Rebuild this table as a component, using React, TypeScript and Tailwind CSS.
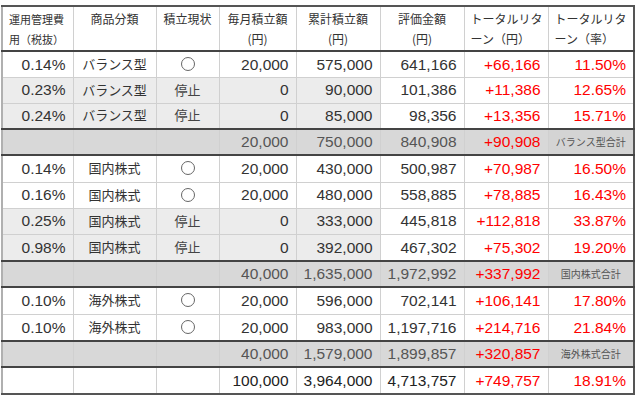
import React from 'react';

type Row = {
  kind: 'item' | 'sub' | 'total';
  fee?: string;
  cat?: string;
  status?: string;
  monthly: string;
  cum: string;
  value: string;
  ret: string;
  rate: string;
};

const rows: Row[] = [
  { kind: 'item', fee: '0.14%', cat: 'バランス型', status: '○', monthly: '20,000', cum: '575,000', value: '641,166', ret: '+66,166', rate: '11.50%' },
  { kind: 'item', fee: '0.23%', cat: 'バランス型', status: '停止', monthly: '0', cum: '90,000', value: '101,386', ret: '+11,386', rate: '12.65%' },
  { kind: 'item', fee: '0.24%', cat: 'バランス型', status: '停止', monthly: '0', cum: '85,000', value: '98,356', ret: '+13,356', rate: '15.71%' },
  { kind: 'sub', monthly: '20,000', cum: '750,000', value: '840,908', ret: '+90,908', rate: 'バランス型合計' },
  { kind: 'item', fee: '0.14%', cat: '国内株式', status: '○', monthly: '20,000', cum: '430,000', value: '500,987', ret: '+70,987', rate: '16.50%' },
  { kind: 'item', fee: '0.16%', cat: '国内株式', status: '○', monthly: '20,000', cum: '480,000', value: '558,885', ret: '+78,885', rate: '16.43%' },
  { kind: 'item', fee: '0.25%', cat: '国内株式', status: '停止', monthly: '0', cum: '333,000', value: '445,818', ret: '+112,818', rate: '33.87%' },
  { kind: 'item', fee: '0.98%', cat: '国内株式', status: '停止', monthly: '0', cum: '392,000', value: '467,302', ret: '+75,302', rate: '19.20%' },
  { kind: 'sub', monthly: '40,000', cum: '1,635,000', value: '1,972,992', ret: '+337,992', rate: '国内株式合計' },
  { kind: 'item', fee: '0.10%', cat: '海外株式', status: '○', monthly: '20,000', cum: '596,000', value: '702,141', ret: '+106,141', rate: '17.80%' },
  { kind: 'item', fee: '0.10%', cat: '海外株式', status: '○', monthly: '20,000', cum: '983,000', value: '1,197,716', ret: '+214,716', rate: '21.84%' },
  { kind: 'sub', monthly: '40,000', cum: '1,579,000', value: '1,899,857', ret: '+320,857', rate: '海外株式合計' },
  { kind: 'total', monthly: '100,000', cum: '3,964,000', value: '4,713,757', ret: '+749,757', rate: '18.91%' },
];

// row heights picked to line up with the screenshot's grid lines
const heights = [
  'h-[26px]', 'h-[26px]', 'h-[26px]', 'h-[26px]', 'h-[27px]', 'h-[26px]', 'h-[26px]',
  'h-[27px]', 'h-[26px]', 'h-[27px]', 'h-[27px]', 'h-[26px]', 'h-[27px]',
];

const num = "font-['Liberation_Sans','Noto_Sans_CJK_JP',sans-serif] text-[15.5px] text-right px-[7px]";
const jp = "font-['Noto_Sans_CJK_JP',sans-serif] text-[13px] text-center pb-[2px]";
const cell = 'border border-[#d0d0d0] p-0 leading-none';
const head = 'border border-[#d0d0d0] border-b-2 border-b-[#444] align-top pt-[2px] font-normal whitespace-nowrap';

export default function App() {
  return (
    <div className="bg-white w-[640px] h-[400px] pt-[5px] pl-[1px]">
      <table className="table-fixed border-collapse w-[632px] text-[#333] border-t-2 border-r-2 border-b-2 border-l-2 border-t-[#555] border-r-[#555] border-b-[#555] border-l-[#b0b0b0]">
        <colgroup>
          <col className="w-[71px]" />
          <col className="w-[83px]" />
          <col className="w-[63px]" />
          <col className="w-[77px]" />
          <col className="w-[84px]" />
          <col className="w-[84px]" />
          <col className="w-[84px]" />
          <col className="w-[86px]" />
        </colgroup>
        <thead>
          <tr className="font-['Noto_Sans_CJK_JP',sans-serif] text-[12px] leading-[20px]">
            <th className={`${head} h-[45px] px-[6px] text-left text-[11px]`}>運用管理費<br />用（税抜）</th>
            <th className={`${head} text-center`}>商品分類</th>
            <th className={`${head} text-center`}>積立現状</th>
            <th className={`${head} text-center`}>毎月積立額<br />(円)</th>
            <th className={`${head} text-center`}>累計積立額<br />(円)</th>
            <th className={`${head} text-center`}>評価金額<br />(円)</th>
            <th className={`${head} px-[6px] text-left`}>トータルリタ<br />ーン（円）</th>
            <th className={`${head} px-[6px] text-left`}>トータルリタ<br />ーン（率）</th>
          </tr>
        </thead>
        <tbody>
          {rows.map((r, i) => {
            const h = heights[i];
            if (r.kind === 'sub') {
              return (
                <tr key={i} className="bg-[#d8d8d8] text-[#555] border-t-2 border-b-2 border-[#444]">
                  <td className={`${cell} ${h}`}></td>
                  <td className={cell}></td>
                  <td className={cell}></td>
                  <td className={`${cell} ${num}`}>{r.monthly}</td>
                  <td className={`${cell} ${num}`}>{r.cum}</td>
                  <td className={`${cell} ${num}`}>{r.value}</td>
                  <td className={`${cell} ${num} text-[#f00]`}>{r.ret}</td>
                  <td className={`${cell} font-['Noto_Sans_CJK_JP',sans-serif] text-[10px] text-center text-[#555] bg-[#d4d4d4] pb-[1px]`}>{r.rate}</td>
                </tr>
              );
            }
            const stopped = r.status === '停止';
            const g = stopped ? 'bg-[#ececec]' : 'bg-white';
            const total = r.kind === 'total';
            return (
              <tr key={i} className={total ? 'text-[#222]' : ''}>
                <td className={`${cell} ${h} ${num} ${g}`}>{r.fee}</td>
                <td className={`${cell} ${jp} ${g}`}>{r.cat}</td>
                <td className={`${cell} ${jp} ${g} text-[#444]`}>
                  {r.status === '○' ? (
                    <span className="inline-block w-[14px] h-[14px] rounded-full border border-[#666] align-middle" aria-label="○" />
                  ) : (
                    r.status
                  )}
                </td>
                <td className={`${cell} ${num} ${g}`}>{r.monthly}</td>
                <td className={`${cell} ${num} ${g}`}>{r.cum}</td>
                <td className={`${cell} ${num} bg-white`}>{r.value}</td>
                <td className={`${cell} ${num} bg-white text-[#f00]`}>{r.ret}</td>
                <td className={`${cell} ${num} bg-white text-[#f00]`}>{r.rate}</td>
              </tr>
            );
          })}
        </tbody>
      </table>
    </div>
  );
}
